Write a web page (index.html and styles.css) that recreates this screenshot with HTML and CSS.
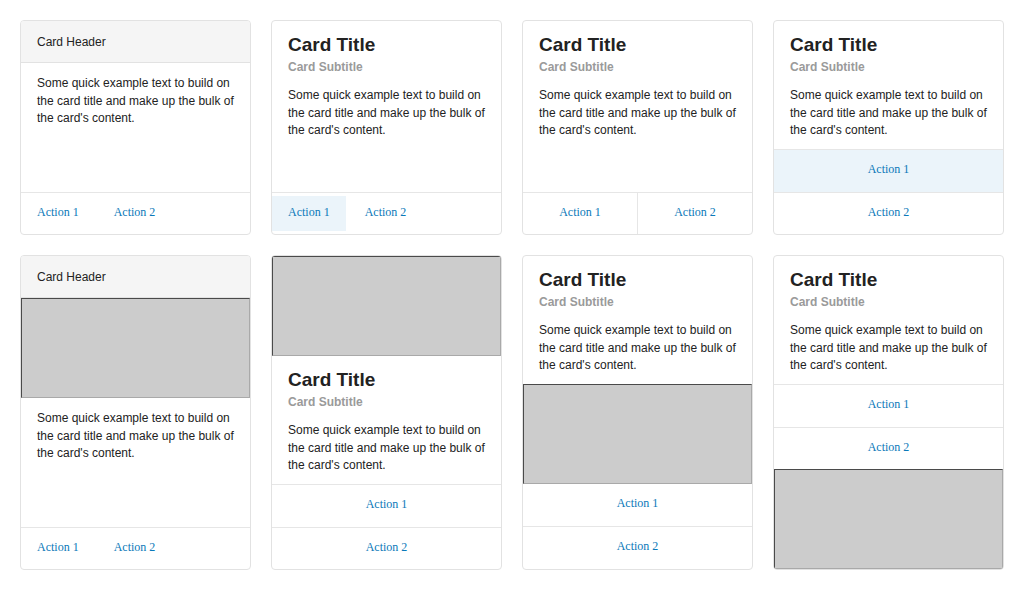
FILE: index.html
```html
<!DOCTYPE html>
<html>
<head>
<meta charset="utf-8">
<link rel="stylesheet" href="styles.css">
</head>
<body>
<div class="grid">
  <div class="card">
    <div class="card-header">Card Header</div>
    <div class="card-body grow">
      <p class="text">Some quick example text to build on the card title and make up the bulk of the card's content.</p>
    </div>
    <div class="actions inline">
      <span class="btn">Action 1</span> <span class="btn">Action 2</span>
    </div>
  </div>

  <div class="card">
    <div class="card-body grow">
      <h3 class="title">Card Title</h3>
      <div class="subtitle">Card Subtitle</div>
      <p class="text">Some quick example text to build on the card title and make up the bulk of the card's content.</p>
    </div>
    <div class="actions inline">
      <span class="btn active">Action 1</span> <span class="btn">Action 2</span>
    </div>
  </div>

  <div class="card">
    <div class="card-body grow">
      <h3 class="title">Card Title</h3>
      <div class="subtitle">Card Subtitle</div>
      <p class="text">Some quick example text to build on the card title and make up the bulk of the card's content.</p>
    </div>
    <div class="actions split">
      <span class="btn">Action 1</span><span class="btn">Action 2</span>
    </div>
  </div>

  <div class="card">
    <div class="card-body grow">
      <h3 class="title">Card Title</h3>
      <div class="subtitle">Card Subtitle</div>
      <p class="text">Some quick example text to build on the card title and make up the bulk of the card's content.</p>
    </div>
    <div class="actions stacked">
      <span class="btn active">Action 1</span><span class="btn">Action 2</span>
    </div>
  </div>

  <div class="card">
    <div class="card-header">Card Header</div>
    <div class="media"></div>
    <div class="card-body grow">
      <p class="text">Some quick example text to build on the card title and make up the bulk of the card's content.</p>
    </div>
    <div class="actions inline">
      <span class="btn">Action 1</span> <span class="btn">Action 2</span>
    </div>
  </div>

  <div class="card">
    <div class="media"></div>
    <div class="card-body grow">
      <h3 class="title">Card Title</h3>
      <div class="subtitle">Card Subtitle</div>
      <p class="text">Some quick example text to build on the card title and make up the bulk of the card's content.</p>
    </div>
    <div class="actions stacked">
      <span class="btn">Action 1</span><span class="btn">Action 2</span>
    </div>
  </div>

  <div class="card">
    <div class="card-body">
      <h3 class="title">Card Title</h3>
      <div class="subtitle">Card Subtitle</div>
      <p class="text">Some quick example text to build on the card title and make up the bulk of the card's content.</p>
    </div>
    <div class="media"></div>
    <div class="actions stacked nobord">
      <span class="btn">Action 1</span><span class="btn">Action 2</span>
    </div>
  </div>

  <div class="card">
    <div class="card-body">
      <h3 class="title">Card Title</h3>
      <div class="subtitle">Card Subtitle</div>
      <p class="text">Some quick example text to build on the card title and make up the bulk of the card's content.</p>
    </div>
    <div class="actions stacked">
      <span class="btn">Action 1</span><span class="btn">Action 2</span>
    </div>
    <div class="media grow-media"></div>
  </div>
</div>
</body>
</html>
```

FILE: styles.css
```css
* { box-sizing: border-box; }
html, body { margin: 0; padding: 0; background: #fff; }
body {
  font-family: "Liberation Sans", Arial, Helvetica, sans-serif;
  color: #222;
}
.grid {
  display: grid;
  grid-template-columns: repeat(4, 1fr);
  gap: 20px;
  padding: 20px;
}
.card {
  display: flex;
  flex-direction: column;
  border: 1px solid #e2e2e2;
  border-radius: 4px;
  overflow: hidden;
  background: #fff;
}
.card-header {
  background: #f5f5f5;
  border-bottom: 1px solid #e2e2e2;
  padding: 13px 16px 11px;
  font-size: 12px;
  line-height: 17px;
  color: #222;
}
.card-body {
  padding: 12px 16px 9.5px;
}
.grow { flex: 1 1 auto; }
.title {
  margin: 1px 0 0;
  font-size: 19px;
  line-height: 22px;
  font-weight: bold;
  color: #222;
}
.subtitle {
  margin-top: 3px;
  font-size: 12px;
  line-height: 16px;
  font-weight: bold;
  color: #9a9a9a;
}
.text {
  margin: 0;
  font-size: 12px;
  line-height: 17.5px;
  color: #222;
}
.subtitle + .text { margin-top: 12px; }
.media {
  height: 100px;
  background: #cccccc;
  border-top: 1px solid #4a4a4a;
  border-left: 1px solid #4a4a4a;
  border-bottom: 1px solid #a9a9a9;
  border-right: 1px solid #a9a9a9;
  flex: 0 0 auto;
}
.grow-media { margin-top: auto; }
.actions {
  border-top: 1px solid #e6e6e6;
  font-family: "Liberation Serif", "Times New Roman", serif;
  font-size: 12px;
  color: #0a79b9;
}
.actions.nobord { border-top: none; }
.actions.inline {
  padding: 3px 0;
}
.actions.inline .btn {
  display: inline-block;
  height: 35px;
  line-height: 33px;
  padding: 0 16px 2px;
}
.actions.split {
  display: flex;
}
.actions.split .btn {
  flex: 1 1 0;
  text-align: center;
  height: 41px;
  line-height: 39px;
  padding-bottom: 2px;
}
.actions.split .btn + .btn { border-left: 1px solid #e6e6e6; }
.actions.stacked {
  display: flex;
  flex-direction: column;
}
.actions.stacked .btn {
  display: block;
  text-align: center;
  height: 41.5px;
  line-height: 39.5px;
  padding-bottom: 2px;
}
.actions.stacked .btn + .btn { border-top: 1px solid #e6e6e6; height: 42.5px; }
.btn.active { background: #ebf4fa; }
```
